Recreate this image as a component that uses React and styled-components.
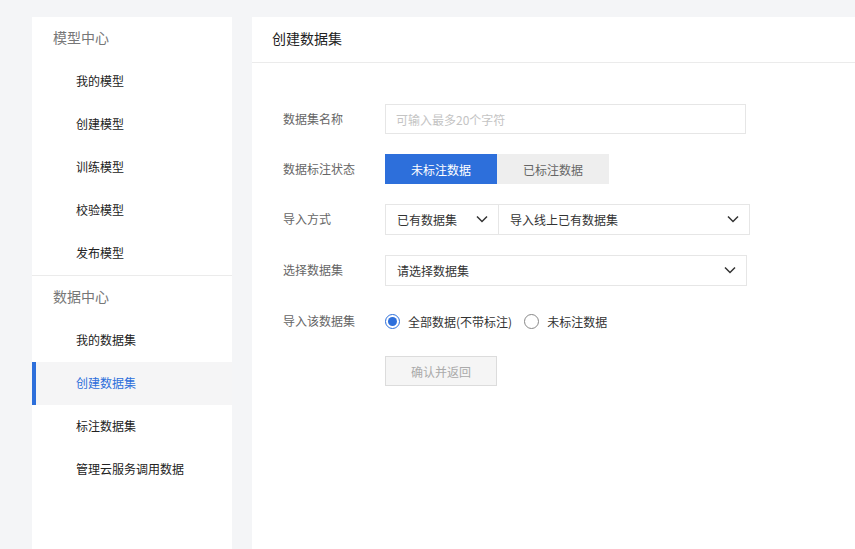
import React, { useState } from "react";
import styled, { createGlobalStyle } from "styled-components";

const GlobalStyle = createGlobalStyle`
  html, body {
    margin: 0;
    padding: 0;
    background: #f4f5f7;
    font-family: "Noto Sans CJK SC", "Noto Sans", sans-serif;
  }
  * { box-sizing: border-box; }
`;

const Page = styled.div`
  display: flex;
  gap: 20px;
  padding: 17px 0 0 32px;
  min-height: 100vh;
`;

const Sidebar = styled.nav`
  width: 200px;
  background: #fff;
  flex-shrink: 0;
`;

const Group = styled.div`
  & + & {
    border-top: 1px solid #ebebeb;
  }
`;

const GroupTitle = styled.div`
  height: 43px;
  display: flex;
  align-items: center;
  padding: 0 0 3px 21px;
  font-size: 14px;
  color: #777;
`;

const NavItem = styled.div`
  height: 43px;
  display: flex;
  align-items: center;
  padding: 0 0 2px 44px;
  font-size: 12px;
  color: ${({ active }) => (active ? "#2d6fdb" : "#222")};
  background: ${({ active }) => (active ? "#f5f5f6" : "transparent")};
  box-shadow: ${({ active }) => (active ? "inset 4px 0 0 #2d6fdb" : "none")};
  cursor: pointer;
`;

const Main = styled.main`
  flex: 1;
  background: #fff;
`;

const Header = styled.div`
  height: 46px;
  display: flex;
  align-items: center;
  padding: 0 0 3px 20px;
  font-size: 14px;
  color: #222;
  border-bottom: 1px solid #ebebeb;
`;

const Form = styled.div`
  padding: 41px 0 0 31px;
  display: flex;
  flex-direction: column;
  gap: 20px;
`;

const Row = styled.div`
  display: flex;
  align-items: center;
  min-height: 30px;
`;

const Label = styled.div`
  width: 102px;
  font-size: 12px;
  color: #666;
  padding-bottom: 2px;
`;

const TextInput = styled.input`
  width: 361px;
  height: 30px;
  border: 1px solid #e6e6e6;
  padding: 0 10px;
  font-family: inherit;
  font-size: 12px;
  color: #333;
  outline: none;
  &::placeholder {
    color: #c4c4c4;
  }
`;

const Toggle = styled.div`
  display: flex;
`;

const ToggleBtn = styled.button`
  width: 112px;
  height: 30px;
  border: none;
  font-family: inherit;
  font-size: 12px;
  cursor: pointer;
  background: ${({ active }) => (active ? "#2d6fdb" : "#eeeeee")};
  color: ${({ active }) => (active ? "#fff" : "#666")};
`;

const SelectGroup = styled.div`
  display: flex;
`;

const Select = styled.div`
  width: ${({ w }) => w}px;
  height: 31px;
  border: 1px solid #e6e6e6;
  & + & {
    border-left: none;
  }
  display: flex;
  align-items: center;
  justify-content: space-between;
  padding: 0 10px 1px 11px;
  font-size: 12px;
  color: #333;
  cursor: pointer;
`;

const Chevron = () => (
  <svg width="12" height="8" viewBox="0 0 12 8" fill="none">
    <path d="M1 1.5L6 6.5L11 1.5" stroke="#333" strokeWidth="1.5" />
  </svg>
);

const Radios = styled.div`
  display: flex;
  align-items: center;
  gap: 12px;
`;

const RadioLabel = styled.label`
  display: flex;
  align-items: center;
  gap: 8px;
  font-size: 12px;
  color: #333;
  cursor: pointer;
`;

const RadioDot = styled.span`
  width: 15px;
  height: 15px;
  border-radius: 50%;
  border: 1px solid ${({ checked }) => (checked ? "#2d6fdb" : "#888")};
  display: flex;
  align-items: center;
  justify-content: center;
  &::after {
    content: "";
    width: 9px;
    height: 9px;
    border-radius: 50%;
    background: ${({ checked }) => (checked ? "#2d6fdb" : "transparent")};
  }
`;

const SubmitBtn = styled.button`
  margin-left: 102px;
  width: 112px;
  height: 30px;
  border: 1px solid #dcdcdc;
  background: #f5f5f5;
  color: #aaa;
  font-family: inherit;
  font-size: 12px;
`;

export default function App() {
  const [marked, setMarked] = useState(false);
  const [scope, setScope] = useState("all");

  return (
    <>
      <GlobalStyle />
      <Page>
        <Sidebar>
          <Group>
            <GroupTitle>模型中心</GroupTitle>
            <NavItem>我的模型</NavItem>
            <NavItem>创建模型</NavItem>
            <NavItem>训练模型</NavItem>
            <NavItem>校验模型</NavItem>
            <NavItem>发布模型</NavItem>
          </Group>
          <Group>
            <GroupTitle>数据中心</GroupTitle>
            <NavItem>我的数据集</NavItem>
            <NavItem active>创建数据集</NavItem>
            <NavItem>标注数据集</NavItem>
            <NavItem>管理云服务调用数据</NavItem>
          </Group>
        </Sidebar>
        <Main>
          <Header>创建数据集</Header>
          <Form>
            <Row>
              <Label>数据集名称</Label>
              <TextInput placeholder="可输入最多20个字符" />
            </Row>
            <Row>
              <Label>数据标注状态</Label>
              <Toggle>
                <ToggleBtn active={!marked} onClick={() => setMarked(false)}>
                  未标注数据
                </ToggleBtn>
                <ToggleBtn active={marked} onClick={() => setMarked(true)}>
                  已标注数据
                </ToggleBtn>
              </Toggle>
            </Row>
            <Row>
              <Label>导入方式</Label>
              <SelectGroup>
                <Select w={114}>
                  已有数据集
                  <Chevron />
                </Select>
                <Select w={251}>
                  导入线上已有数据集
                  <Chevron />
                </Select>
              </SelectGroup>
            </Row>
            <Row>
              <Label>选择数据集</Label>
              <Select w={362}>
                请选择数据集
                <Chevron />
              </Select>
            </Row>
            <Row>
              <Label>导入该数据集</Label>
              <Radios>
                <RadioLabel onClick={() => setScope("all")}>
                  <RadioDot checked={scope === "all"} />
                  全部数据(不带标注)
                </RadioLabel>
                <RadioLabel onClick={() => setScope("unmarked")}>
                  <RadioDot checked={scope === "unmarked"} />
                  未标注数据
                </RadioLabel>
              </Radios>
            </Row>
            <Row>
              <SubmitBtn>确认并返回</SubmitBtn>
            </Row>
          </Form>
        </Main>
      </Page>
    </>
  );
}
